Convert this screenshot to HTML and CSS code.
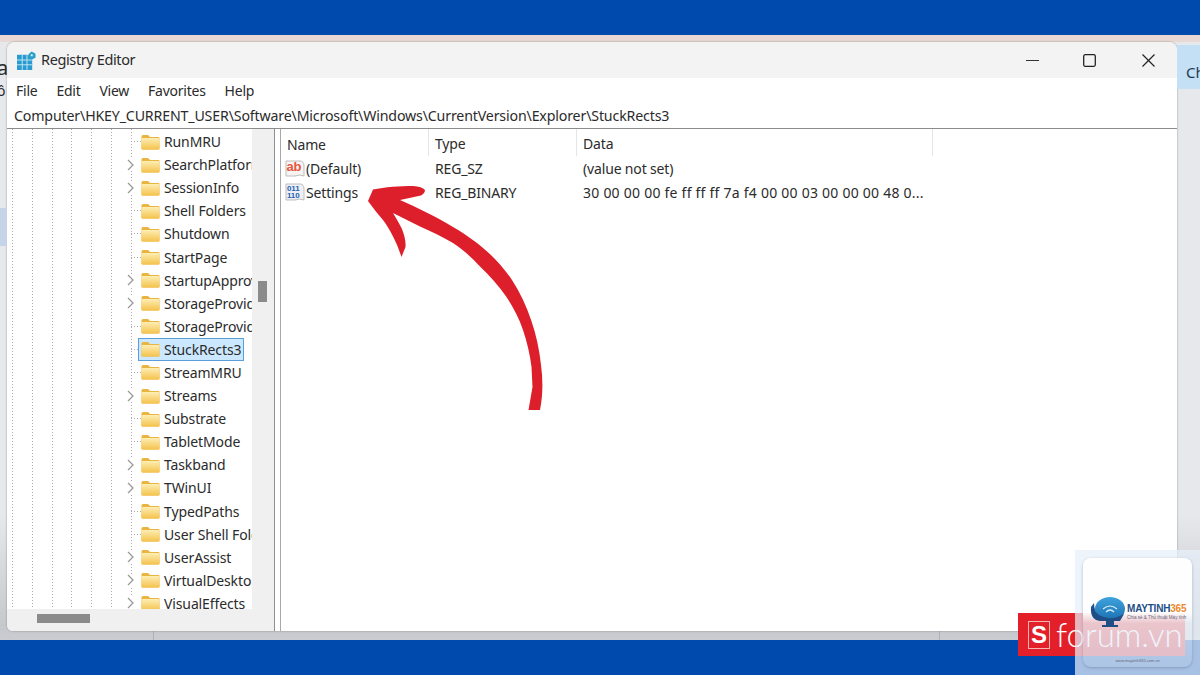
FILE: index.html
```html
<!DOCTYPE html>
<html lang="en">
<head>
<meta charset="utf-8">
<title>Registry Editor</title>
<link rel="stylesheet" href="styles.css">
</head>
<body>

<svg class="defs" width="0" height="0">
  <defs>
    <linearGradient id="foldergrad" x1="0" y1="0" x2="0" y2="1">
      <stop offset="0" stop-color="#fdeeb4"/>
      <stop offset="1" stop-color="#f5c24c"/>
    </linearGradient>
    <linearGradient id="globegrad" x1="0" y1="0" x2="0" y2="1">
      <stop offset="0" stop-color="#3fa3dc"/>
      <stop offset="1" stop-color="#1b6fb0"/>
    </linearGradient>
    <symbol id="folder" viewBox="0 0 19 16">
      <path d="M0.5 2.5 Q0.5 1 2 1 H7 L9 3 H17.5 Q18.5 3 18.5 4 V14.5 Q18.5 15.5 17.5 15.5 H1.5 Q0.5 15.5 0.5 14.5 Z" fill="#e9b43f"/>
      <rect x="0.5" y="4" width="18" height="11.5" rx="1" fill="url(#foldergrad)"/>
    </symbol>
    <symbol id="chev" viewBox="0 0 7 12">
      <path d="M1 1 L6 6 L1 11" fill="none" stroke="#9a9a9a" stroke-width="1.3"/>
    </symbol>
  </defs>
</svg>

<div class="topbar"></div>

<div class="desk">
  <div class="window">
    <div class="titlebar">
      <svg class="appicon" width="19" height="19" viewBox="0 0 20 20">
        <rect x="0" y="4" width="16" height="16" fill="#2a9bd0"/>
        <path d="M5.5 4 V20 M10.5 4 V20 M0 9.5 H16 M0 14.5 H16" stroke="#c4e6f4" stroke-width="1"/>
        <path d="M15.5 0.5 L19.5 3 V7 L15.5 9 L12.5 7 V3 Z" fill="#2aa0c9"/>
        <rect x="14.5" y="3.5" width="2" height="2" fill="#e4f4fa"/>
      </svg>
      <span class="title">Registry Editor</span>
      <div class="winbtns">
        <svg width="13" height="13" viewBox="0 0 13 13"><path d="M0 6.5 H13" stroke="#333" stroke-width="1"/></svg>
        <svg width="13" height="13" viewBox="0 0 13 13"><rect x="0.7" y="0.7" width="11.6" height="11.6" rx="1.5" fill="none" stroke="#222" stroke-width="1.3"/></svg>
        <svg class="closebtn" width="13" height="13" viewBox="0 0 13 13"><path d="M0.5 0.5 L12.5 12.5 M12.5 0.5 L0.5 12.5" stroke="#222" stroke-width="1.2"/></svg>
      </div>
    </div>

    <div class="menubar">
      <span>File</span><span>Edit</span><span>View</span><span>Favorites</span><span>Help</span>
    </div>

    <div class="address">Computer\HKEY_CURRENT_USER\Software\Microsoft\Windows\CurrentVersion\Explorer\StuckRects3</div>

    <div class="panes">
      <div class="treepane">
        <div class="treetop">
          <div class="tree">
            <div class="row"><i class="dash"></i><svg class="fld"><use href="#folder"/></svg><span>RunMRU</span></div>
            <div class="row"><svg class="chev"><use href="#chev"/></svg><svg class="fld"><use href="#folder"/></svg><span>SearchPlatform</span></div>
            <div class="row"><svg class="chev"><use href="#chev"/></svg><svg class="fld"><use href="#folder"/></svg><span>SessionInfo</span></div>
            <div class="row"><i class="dash"></i><svg class="fld"><use href="#folder"/></svg><span>Shell Folders</span></div>
            <div class="row"><i class="dash"></i><svg class="fld"><use href="#folder"/></svg><span>Shutdown</span></div>
            <div class="row"><i class="dash"></i><svg class="fld"><use href="#folder"/></svg><span>StartPage</span></div>
            <div class="row"><svg class="chev"><use href="#chev"/></svg><svg class="fld"><use href="#folder"/></svg><span>StartupApproved</span></div>
            <div class="row"><svg class="chev"><use href="#chev"/></svg><svg class="fld"><use href="#folder"/></svg><span>StorageProvider</span></div>
            <div class="row"><i class="dash"></i><svg class="fld"><use href="#folder"/></svg><span>StorageProvider</span></div>
            <div class="row"><i class="dash"></i><div class="selbox"><svg class="fld"><use href="#folder"/></svg><span>StuckRects3</span></div></div>
            <div class="row"><i class="dash"></i><svg class="fld"><use href="#folder"/></svg><span>StreamMRU</span></div>
            <div class="row"><svg class="chev"><use href="#chev"/></svg><svg class="fld"><use href="#folder"/></svg><span>Streams</span></div>
            <div class="row"><i class="dash"></i><svg class="fld"><use href="#folder"/></svg><span>Substrate</span></div>
            <div class="row"><i class="dash"></i><svg class="fld"><use href="#folder"/></svg><span>TabletMode</span></div>
            <div class="row"><svg class="chev"><use href="#chev"/></svg><svg class="fld"><use href="#folder"/></svg><span>Taskband</span></div>
            <div class="row"><svg class="chev"><use href="#chev"/></svg><svg class="fld"><use href="#folder"/></svg><span>TWinUI</span></div>
            <div class="row"><i class="dash"></i><svg class="fld"><use href="#folder"/></svg><span>TypedPaths</span></div>
            <div class="row"><i class="dash"></i><svg class="fld"><use href="#folder"/></svg><span>User Shell Folders</span></div>
            <div class="row"><svg class="chev"><use href="#chev"/></svg><svg class="fld"><use href="#folder"/></svg><span>UserAssist</span></div>
            <div class="row"><svg class="chev"><use href="#chev"/></svg><svg class="fld"><use href="#folder"/></svg><span>VirtualDesktops</span></div>
            <div class="row"><svg class="chev"><use href="#chev"/></svg><svg class="fld"><use href="#folder"/></svg><span>VisualEffects</span></div>
          </div>
          <div class="vscroll"><div class="vthumb"></div></div>
        </div>
        <div class="hscroll"><div class="hthumb"></div></div>
      </div>

      <div class="listpane">
        <div class="listhead">
          <div class="col-name">Name</div>
          <div class="col-type">Type</div>
          <div class="col-data">Data</div>
        </div>
        <div class="listrow">
          <div class="col-name">
            <svg class="regicon" width="20" height="20" viewBox="0 0 20 20">
              <path d="M1 3 H15 Q19 3 19 8 V18 Q15 16 10 18 H1 Z" fill="#f7f5f3" stroke="#bdbdbd"/>
              <text x="1.5" y="12.5" class="abtxt">ab</text>
            </svg>
            (Default)
          </div>
          <div class="col-type">REG_SZ</div>
          <div class="col-data">(value not set)</div>
        </div>
        <div class="listrow">
          <div class="col-name">
            <svg class="regicon" width="20" height="20" viewBox="0 0 20 20">
              <path d="M1 2 H15 Q19 2 19 7 V18 Q15 16 10 18 H1 Z" fill="#eef0f6" stroke="#bdbdbd"/>
              <text x="2" y="9" class="bintxt">011</text>
              <text x="2" y="16" class="bintxt">110</text>
            </svg>
            Settings
          </div>
          <div class="col-type">REG_BINARY</div>
          <div class="col-data hex">30 00 00 00 fe ff ff ff 7a f4 00 00 03 00 00 00 48 0...</div>
        </div>
      </div>
    </div>
  </div>
</div>

<div class="bottombar"></div>

<!-- bits of the page behind the window -->
<span class="behind-a">a</span>
<span class="behind-o">ô</span>
<div class="behind-sel"></div>
<div class="behind-tab">Ch</div>

<!-- hand drawn arrow -->
<svg class="arrow" width="190" height="235" viewBox="360 180 190 235">
  <path fill="#dc1f2b" d="M540 410 C543 395 543 380 541 365 C538 335 528 305 512 280 C495 255 475 240 453 227 C435 216 418 208 400 200 L421 195.5 Q425 193 425 190 Q422 186.5 413 186 C400 186 385 187 373 189.5 L368 201 C373 208 378 214 383 220 C390 229 397 243 401.5 257 L405.5 247 C406 240 404 234 401.5 228 C399 223 396 218 393 213 L420 226.5 C432 232 443 237 453 243 C465 251 473 259 480 266.5 C490 276 499 286 506.5 297 C513 307 519 318 523 330 C527 342 530 354 531.5 367 L532.5 387 L528.5 410 Z"/>
</svg>

<!-- watermarks -->
<div class="sforum">
  <div class="slogo">S</div>
  <span class="sforum-text">forum.vn</span>
</div>
<div class="mt-panel">
  <div class="mt-card">
    <div class="mt-brand">
      <svg width="36" height="31" viewBox="0 0 36 31">
        <ellipse cx="20" cy="12" rx="15" ry="12" fill="url(#globegrad)"/>
        <path d="M1 10 Q0 23 10 24 H30 L34 17 Q20 25 9 18 Q4 15 4 6 Z" fill="#1f4e86"/>
        <path d="M13 12 Q20 6 27 12 M16 15 Q20 11 24 15" fill="none" stroke="#d6eefa" stroke-width="1.2"/>
        <rect x="16" y="24" width="8" height="4" fill="#1f4e86"/>
        <rect x="12" y="28" width="16" height="2" fill="#1f4e86"/>
      </svg>
      <div class="mt-words">
        <div class="mt-name">MAYTINH<b>365</b></div>
        <div class="mt-sub">Chia sẻ &amp; Thủ thuật Máy tính</div>
      </div>
    </div>
    <div class="mt-url">www.maytinh365.com.vn</div>
  </div>
</div>

</body>
</html>
```

FILE: styles.css
```css
* {
  box-sizing: border-box;
}

html, body {
  margin: 0;
  padding: 0;
  height: 100%;
  overflow: hidden;
}

body {
  width: 1200px;
  height: 675px;
  display: flex;
  flex-direction: column;
  font-family: "Noto Sans", "Open Sans", sans-serif;
  font-size: 14px;
  color: #2b2b2b;
  background: #dfe2e6;
}

.defs {
  position: absolute;
}

.topbar, .bottombar {
  height: 35px;
  background: #004aad;
  flex: none;
}

.desk {
  flex: 1;
  min-height: 0;
  display: flex;
  flex-direction: column;
  padding: 7px 23px 9px 7px;
  background:
    linear-gradient(#e8d9d4 0 7px, transparent 7px),
    linear-gradient(90deg, transparent 153px, #aeb2b8 153px 154px, transparent 154px 939px, #aeb2b8 939px 940px, transparent 940px),
    linear-gradient(to bottom, #e6e8ec, #e6e8ec 480px, #c6c8cc 590px, #c9ccd1);
}

.window {
  flex: 1;
  min-height: 0;
  display: flex;
  flex-direction: column;
  background: #fff;
  border-radius: 8px 8px 4px 6px;
  box-shadow: 0 0 2px #808080;
  overflow: hidden;
}

.titlebar {
  height: 36px;
  flex: none;
  display: flex;
  align-items: center;
  padding-left: 10px;
  background: #f3f3f3;
}

.title {
  margin: -2px 0 0 5px;
  font-size: 14.5px;
  letter-spacing: -0.38px;
}

.winbtns {
  margin-left: auto;
  padding-right: 22px;
  display: flex;
  gap: 44px;
}

.closebtn {
  margin-left: 2px;
}

.menubar {
  height: 24px;
  flex: none;
  display: flex;
  gap: 19px;
  align-items: center;
  padding-left: 9px;
  background: #fff;
  font-size: 14px;
  letter-spacing: -0.25px;
}

.address {
  height: 25px;
  flex: none;
  margin-top: 2px;
  padding-left: 7px;
  line-height: 24px;
  background: #fff;
  border-bottom: 1px solid #8c8c8c;
  font-size: 14.2px;
  letter-spacing: -0.16px;
  white-space: nowrap;
}

.panes {
  flex: 1;
  min-height: 0;
  display: flex;
}

.treepane {
  width: 268px;
  flex: none;
  min-height: 0;
  display: flex;
  flex-direction: column;
  background: #f0f0f0;
  border-right: 1px solid #8f8f8f;
}

.treetop {
  flex: 1;
  min-height: 0;
  display: flex;
}

.tree {
  width: 245px;
  flex: none;
  overflow: hidden;
  padding: 1px 0 0 120px;
  background-color: #fff;
  background-image:
    repeating-linear-gradient(#aaa 0 1px, transparent 1px 3px),
    repeating-linear-gradient(#aaa 0 1px, transparent 1px 3px),
    repeating-linear-gradient(#aaa 0 1px, transparent 1px 3px),
    repeating-linear-gradient(#aaa 0 1px, transparent 1px 3px),
    repeating-linear-gradient(#aaa 0 1px, transparent 1px 3px),
    repeating-linear-gradient(#aaa 0 1px, transparent 1px 3px),
    repeating-linear-gradient(#aaa 0 1px, transparent 1px 3px);
  background-size: 1px 100%;
  background-repeat: no-repeat;
  background-position: 5px 0, 25px 0, 45px 0, 64px 0, 84px 0, 104px 0, 124px 0;
}

.row {
  height: 23.1px;
  display: flex;
  align-items: center;
  white-space: nowrap;
  font-size: 14px;
  letter-spacing: -0.12px;
}

.chev {
  width: 7px;
  height: 12px;
  flex: none;
  margin-right: 7px;
  background: #fff;
}

.dash {
  width: 10px;
  height: 1px;
  flex: none;
  margin-left: 4px;
  background: repeating-linear-gradient(90deg, #aaa 0 1px, transparent 1px 3px);
}

.fld {
  width: 19px;
  height: 16px;
  flex: none;
  margin-right: 4px;
}

.selbox {
  display: flex;
  align-items: center;
  height: 23px;
  width: 106px;
  margin-left: -3px;
  padding-left: 2px;
  background: #cce8ff;
  border: 1px solid #5b9fd8;
}

.vscroll {
  flex: 1;
  background: #f0f0f0;
  padding-top: 152px;
}

.vthumb {
  width: 9px;
  height: 21px;
  margin-left: 6px;
  background: #8b8b8b;
}

.hscroll {
  height: 22px;
  flex: none;
  padding: 5px 0 0 30px;
  background: #f0f0f0;
}

.hthumb {
  width: 53px;
  height: 9px;
  background: #8b8b8b;
}

.listpane {
  flex: 1;
  margin-left: 5px;
  border-left: 1px solid #a8a8a8;
  background: #fff;
}

.listhead, .listrow {
  display: flex;
  align-items: center;
  font-size: 14px;
  letter-spacing: -0.16px;
}

.listhead {
  height: 27px;
  align-items: stretch;
}

.listrow {
  height: 24px;
}

.col-name {
  width: 148px;
  padding-left: 6px;
  display: flex;
  align-items: center;
  gap: 1px;
}

.col-type {
  width: 148px;
  padding-left: 6px;
}

.col-data {
  width: 356px;
  padding-left: 6px;
  white-space: nowrap;
}

.hex {
  letter-spacing: 0.24px;
}

.listhead .col-name, .listhead .col-type, .listhead .col-data {
  padding-top: 5px;
  line-height: 20px;
  border-right: 1px solid #e5e5e5;
}

.listrow .col-name {
  padding-left: 4px;
}

.abtxt {
  font: bold 13px "Liberation Sans", sans-serif;
  fill: #e8563e;
}

.bintxt {
  font: bold 8px "Liberation Sans", sans-serif;
  fill: #2a5fb0;
}

.behind-a {
  position: absolute;
  left: -3px;
  top: 54px;
  font-size: 20px;
}

.behind-o {
  position: absolute;
  left: -3px;
  top: 81px;
  font-size: 14px;
}

.behind-sel {
  position: absolute;
  left: 0;
  top: 208px;
  width: 7px;
  height: 38px;
  background: #c6d4e8;
}

.behind-tab {
  position: absolute;
  left: 1177px;
  top: 45px;
  width: 23px;
  height: 44px;
  padding: 17px 0 0 9px;
  background: #c4e0f4;
  color: #1f3a55;
  font-size: 15px;
  overflow: hidden;
}

.arrow {
  position: absolute;
  left: 360px;
  top: 180px;
}

.sforum {
  position: absolute;
  left: 1018px;
  top: 613px;
  width: 167px;
  height: 43px;
  display: flex;
  align-items: center;
  gap: 6px;
  padding-left: 10px;
  background: #e3202a;
  color: #fff;
}

.slogo {
  width: 22px;
  height: 28px;
  border: 1px solid #f4b5b5;
  text-align: center;
  font: bold 24px/26px "Liberation Sans", sans-serif;
}

.sforum-text {
  font: 300 33px/43px "Lato", sans-serif;
}

.mt-panel {
  position: absolute;
  left: 1075px;
  top: 550px;
  width: 125px;
  height: 125px;
  padding: 8px;
  background: rgba(232, 240, 250, 0.72);
}

.mt-card {
  position: relative;
  height: 109px;
  padding: 39px 0 0 7px;
  border-radius: 8px;
  background: linear-gradient(rgba(255, 255, 255, 0.95) 50%, rgba(255, 255, 255, 0.2) 60%, rgba(200, 218, 240, 0.15));
  box-shadow: 0 1px 3px rgba(90, 110, 140, 0.45);
}

.mt-brand {
  display: flex;
  align-items: center;
  gap: 1px;
}

.mt-name {
  font: bold 10px/10px "Liberation Sans", sans-serif;
  color: #1f4e86;
  letter-spacing: -0.2px;
}

.mt-name b {
  color: #ec8a2e;
}

.mt-sub {
  font: 4.6px/7px "Liberation Sans", sans-serif;
  color: #667;
  white-space: nowrap;
}

.mt-url {
  position: absolute;
  left: 0;
  right: 0;
  bottom: 3px;
  text-align: center;
  font: 4px/6px "Liberation Sans", sans-serif;
  color: #667;
}
```
